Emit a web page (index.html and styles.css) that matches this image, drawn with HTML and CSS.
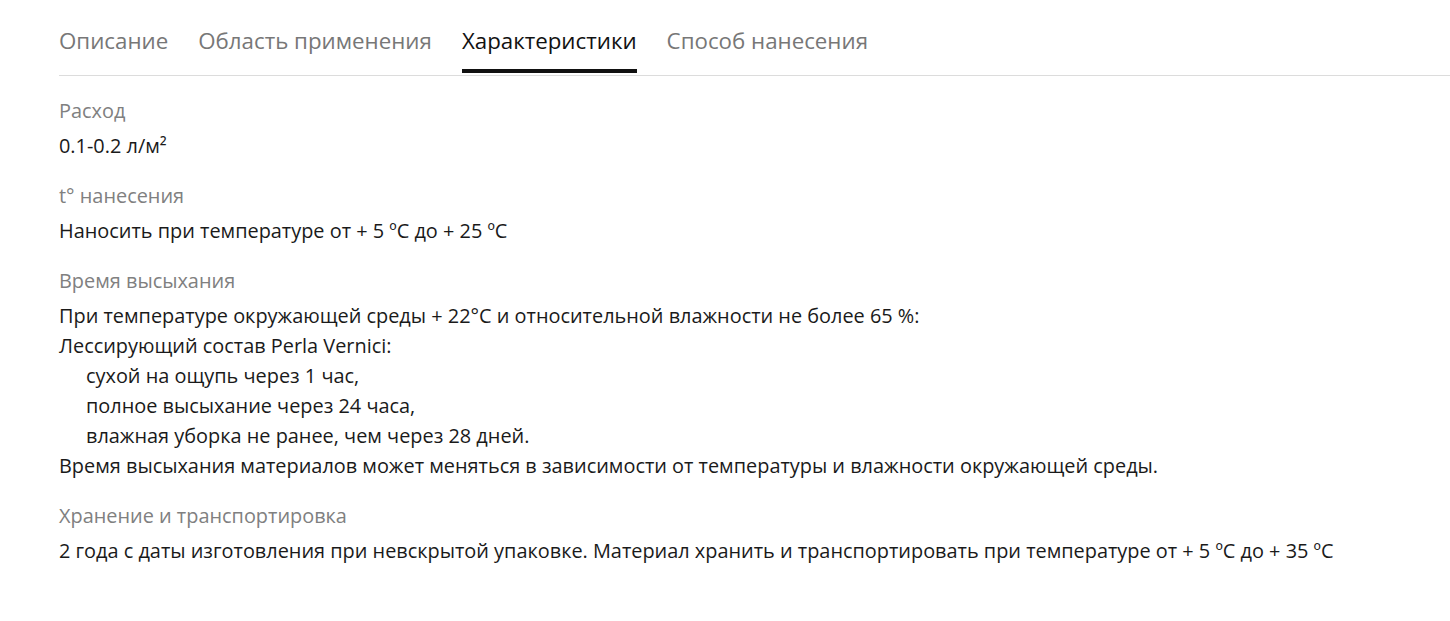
FILE: index.html
```html
<!DOCTYPE html>
<html lang="ru">
<head>
    <meta charset="UTF-8">
    <title>Характеристики</title>
    <link rel="stylesheet" href="styles.css">
</head>
<body>
    <div class="product-tabs">
        <nav class="tabs-nav">
            <a href="#" class="tab">Описание</a>
            <a href="#" class="tab">Область применения</a>
            <a href="#" class="tab active">Характеристики</a>
            <a href="#" class="tab">Способ нанесения</a>
        </nav>
        <div class="tab-content">
            <div class="spec">
                <div class="spec-label">Расход</div>
                <div class="spec-value">0.1-0.2 л/м²</div>
            </div>
            <div class="spec">
                <div class="spec-label">t° нанесения</div>
                <div class="spec-value">Наносить при температуре от + 5 ºС до + 25 ºС</div>
            </div>
            <div class="spec">
                <div class="spec-label">Время высыхания</div>
                <div class="spec-value">
                    <p>При температуре окружающей среды + 22°С и относительной влажности не более 65 %:</p>
                    <p>Лессирующий состав Perla Vernici:</p>
                    <p class="indent">сухой на ощупь через 1 час,</p>
                    <p class="indent">полное высыхание через 24 часа,</p>
                    <p class="indent">влажная уборка не ранее, чем через 28 дней.</p>
                    <p>Время высыхания материалов может меняться в зависимости от температуры и влажности окружающей среды.</p>
                </div>
            </div>
            <div class="spec">
                <div class="spec-label">Хранение и транспортировка</div>
                <div class="spec-value">2 года с даты изготовления при невскрытой упаковке. Материал хранить и транспортировать при температуре от + 5 ºС до + 35 ºС</div>
            </div>
        </div>
    </div>
</body>
</html>
```

FILE: styles.css
```css
* {
    margin: 0;
    padding: 0;
    box-sizing: border-box;
}

body {
    font-family: "Open Sans", Arial, sans-serif;
    background: #fff;
    color: #1a1a1a;
    padding-left: 59px;
}

.tabs-nav {
    display: flex;
    gap: 30px;
    border-bottom: 1px solid #dcdcdc;
    padding-top: 26px;
}

.tab {
    font-size: 22.3px;
    line-height: 30px;
    color: #777;
    text-decoration: none;
    padding-bottom: 13px;
    border-bottom: 4px solid transparent;
    margin-bottom: 2px;
}

.tab.active {
    color: #111;
    border-bottom-color: #111;
}

.tab-content {
    padding-top: 20px;
}

.spec {
    margin-bottom: 20px;
}

.spec-label {
    font-size: 19.9px;
    line-height: 30px;
    color: #808080;
    margin-bottom: 5px;
}

.spec-value {
    font-size: 19.9px;
    line-height: 30px;
    color: #1a1a1a;
}

.spec-value .indent {
    padding-left: 27px;
}
```
